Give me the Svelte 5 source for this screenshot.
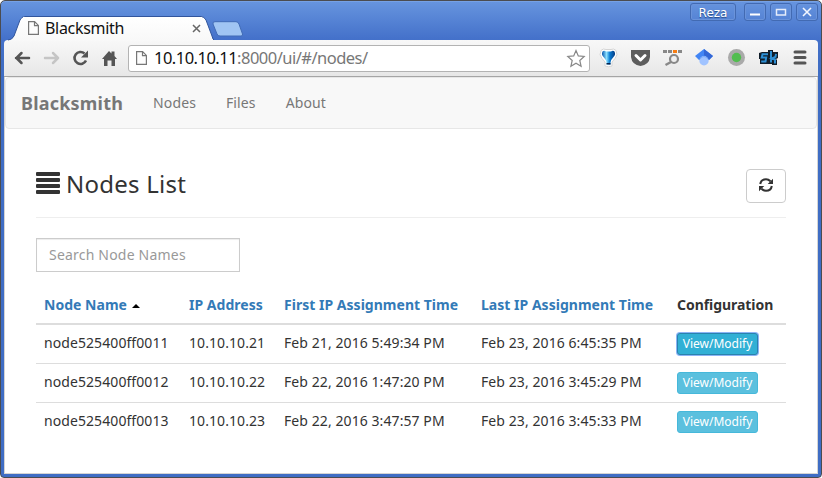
<script>
  let query = $state('');
  const nodes = [
    { name: 'node525400ff0011', ip: '10.10.10.21', first: 'Feb 21, 2016 5:49:34 PM', last: 'Feb 23, 2016 6:45:35 PM', active: true },
    { name: 'node525400ff0012', ip: '10.10.10.22', first: 'Feb 22, 2016 1:47:20 PM', last: 'Feb 23, 2016 3:45:29 PM' },
    { name: 'node525400ff0013', ip: '10.10.10.23', first: 'Feb 22, 2016 3:47:57 PM', last: 'Feb 23, 2016 3:45:33 PM' }
  ];
  const shown = $derived(nodes.filter((n) => n.name.includes(query)));
</script>

{#snippet page()}
  <svg width="11" height="14" viewBox="0 0 11 14"><path d="M.6.6h6L10.400 4.400V13.400H.6zM6.500.6v4h4" fill="#fdfdfd" stroke="#777" stroke-width="1.200"/></svg>
{/snippet}

<div class="window">
  <header class="titlebar">
    <div class="tab">
      <svg class="shape" width="206" height="25" viewBox="0 0 206 25">
        <defs><linearGradient id="tabfill" x2="0" y2="1"><stop stop-color="#fff"/><stop offset="1" stop-color="#f8f8f8"/></linearGradient></defs>
        <path d="M0 25V24Q4 24 6 20L12 4Q13.500 .5 17 .5H193Q196 .5 198 4L204 20Q205 24 206 24V25Z" fill="url(#tabfill)"/>
        <path d="M0 24Q4 24 6 20L12 4Q13.500 .5 17 .5H193Q196 .5 198 4L204 20Q205 24 206 24" fill="none" stroke="#31559c" stroke-width="1"/>
        <path d="M15 1.500H194" stroke="#fff"/>
      </svg>
      <div class="tabrow">
        {@render page()}
        <span class="tabname">Blacksmith</span>
        <svg class="close" width="9" height="9" viewBox="0 0 9 9"><path d="M1 1l7 7M8 1L1 8" stroke="#666" stroke-width="1.500"/></svg>
      </div>
    </div>
    <svg class="newtab" width="32" height="16" viewBox="0 0 32 16"><path d="M3 .7H24Q26 .7 27 3L30.500 13Q31 15 29 15H8Q6 15 5 13L1 3Q.5 .7 3 .7Z" fill="#a0c5f3" stroke="#416bb5"/></svg>
    <div class="controls">
      <span class="user">Reza</span>
      <span class="ctl"><svg width="20" height="17"><path d="M5 10.500h10" stroke="#fff" stroke-width="2"/></svg></span>
      <span class="ctl"><svg width="20" height="17"><path d="M5.500 5.500h9v5.500h-9z" fill="none" stroke="#e6edfa" stroke-width="1.500"/></svg></span>
      <span class="ctl"><svg width="20" height="17"><path d="M6 4l8 8M14 4l-8 8" stroke="#f2f6ff" stroke-width="1.600"/></svg></span>
    </div>
  </header>

  <div class="toolbar">
    <svg class="nav" width="114" height="20" viewBox="0 0 114 20" fill="none">
      <path d="M16 10H3M8.500 5L3.500 10L8.500 15" stroke="#555" stroke-width="2.500" stroke-linecap="round" stroke-linejoin="round"/>
      <path d="M32 10H45M40 5L45 10L40 15" stroke="#c5c5c5" stroke-width="2.500" stroke-linecap="round" stroke-linejoin="round"/>
      <path d="M71.500 5.500A6 6 0 1 0 73 12.500" stroke="#555" stroke-width="2.600"/>
      <path d="M75 2.500v7h-7z" fill="#555"/>
      <path d="M89 11L96 3l2.500 2.500V3.500h3V8L104 11H102v7H98.500V12.500H94.500V18H91V11z" fill="#555"/>
    </svg>
    <div class="address">
      {@render page()}
      <span class="url"><b>10.10.10.11</b>:8000/ui/#/nodes/</span>
      <svg class="star" width="20" height="19" viewBox="0 0 20 19"><path d="M10 1.500l2.300 5.400 5.900.6-4.400 4 1.300 5.800L10 14.300l-5.100 3L6.200 11.500 1.800 7.500l5.900-.6z" fill="#fff" stroke="#888" stroke-width="1.200"/></svg>
    </div>
    <svg class="extensions" width="216" height="22" viewBox="0 0 216 22">
      <defs><linearGradient id="drop" x2="1"><stop stop-color="#0755ad"/><stop offset=".35" stop-color="#8ce0ff"/><stop offset=".6" stop-color="#087bd2"/><stop offset="1" stop-color="#083c83"/></linearGradient></defs>
      <path d="M2 3.500Q4 1 7 2.500H12Q15 1 17 3.500Q19.500 8 16 11.500L13 15V19Q9.500 20.500 6 19V15L3 11.500Q-.5 8 2 3.500Z" fill="#fff" stroke="#d5d5d5"/>
      <path d="M3.500 4.500Q5 3 7 4.500H12Q14 3 15.500 4.500Q17 7.500 14.500 10Q12 12.500 11.500 15.500V17.500H7.500V15.500Q7 12.500 4.500 10Q2 7.500 3.500 4.500Z" fill="url(#drop)"/>
      <path d="M7.500 16h4v1.500h-4z" fill="#08234c"/>
      <path d="M32 3H51V10Q50 18 41.500 19Q33 18 32 10Z" fill="#5d5d5d"/><path d="M37 8.500l4.500 4.500L46 8.500" fill="none" stroke="#fff" stroke-width="3" stroke-linecap="round" stroke-linejoin="round"/>
      <path d="M64 4.500h19" stroke="#888" stroke-width="3" stroke-dasharray="4 1"/><path d="M74 4.500h4" stroke="#f77d13" stroke-width="3"/>
      <circle cx="75" cy="12" r="4" fill="none" stroke="#888" stroke-width="2.200"/><path d="M72 15l-5.500 3" stroke="#888" stroke-width="2.400"/>
      <path d="M96 9L105 2l9 7-4 4H100z" fill="#4285f4"/><path d="M105 2l9 7-4 4L105 8z" fill="#3367d6"/><circle cx="105" cy="13.700" r="4.700" fill="#a0c3ff"/><path d="M101 12Q105 7 109 12" stroke="#7baaf7" fill="none"/>
      <circle cx="137.500" cy="10.500" r="8.500" fill="#aaa"/><circle cx="137.500" cy="10.500" r="4.700" fill="#52bd50"/>
      <path d="M163 5H169V3H174V5H179V11L177 12L178 13V18H173V17H161V12H160V6Z" fill="#101d29"/>
      <path d="M169 7.200h-5.500l-.8 3.300h4.500l-.7 4h-4.300M172 4v11.500M177 6.800l-.5 3-4 1.700 3.500 1v4" fill="none" stroke="#2b8ed4" stroke-width="2"/>
      <path d="M196 5h10M196 10.500h10M196 16h10" stroke="#555" stroke-width="3" stroke-linecap="round"/>
    </svg>
  </div>

  <main>
    <nav class="navbar"><span class="brand">Blacksmith</span><span>Nodes</span><span>Files</span><span>About</span></nav>
    <section>
      <div class="heading">
        <svg width="24" height="22"><path d="M1 0h22q1 0 1 1v2q0 1-1 1H1q-1 0-1-1V1q0-1 1-1zM1 6h22q1 0 1 1v2q0 1-1 1H1q-1 0-1-1V7q0-1 1-1zM1 12h22q1 0 1 1v2q0 1-1 1H1q-1 0-1-1v-2q0-1 1-1zM1 18h22q1 0 1 1v2q0 1-1 1H1q-1 0-1-1v-2q0-1 1-1z" fill="#333"/></svg>
        <h1>Nodes List</h1>
        <button class="refresh" aria-label="Refresh"><svg width="14" height="14" viewBox="0 0 14 14"><path d="M1.200 6Q2 1.200 7 1.200Q9.500 1.200 11.500 3.200M12.800 8Q12 12.800 7 12.800Q4.500 12.800 2.500 10.800" fill="none" stroke="#333" stroke-width="2"/><path d="M14 .7V6H8.700zM0 13.300V8h5.300z" fill="#333"/></svg></button>
      </div>
      <input bind:value={query} placeholder="Search Node Names" />
      <table>
        <colgroup><col class="c1"/><col class="c2"/><col class="c3"/><col class="c4"/><col/></colgroup>
        <thead><tr><th>Node Name<i class="caret"></i></th><th>IP Address</th><th>First IP Assignment Time</th><th>Last IP Assignment Time</th><th class="plain">Configuration</th></tr></thead>
        <tbody>
          {#each shown as node}
            <tr><td>{node.name}</td><td>{node.ip}</td><td>{node.first}</td><td>{node.last}</td><td><button class="view" class:active={node.active}>View/Modify</button></td></tr>
          {/each}
        </tbody>
      </table>
    </section>
  </main>
</div>

<style>
  :global(body) { margin: 0; background: #fff; }
  * { box-sizing: border-box; }
  svg { display: block; flex: none; }
  .window { width: 822px; height: 478px; display: flex; flex-direction: column; padding: 0 3px 3px; border: 1px solid #4b4c50; border-radius: 5px 5px 4px 4px; background: linear-gradient(#6795df, #4471ca 38px, #3f6dc4 60px); font: 14px/20px "Noto Sans", sans-serif; color: #333; overflow: hidden; box-shadow: inset 0 1px #76a1e5; }
  .titlebar { height: 39px; display: flex; align-items: flex-end; flex: none; }
  .tab { width: 206px; height: 25px; margin-left: 4px; display: grid; margin-bottom: -1px; z-index: 1; }
  .tab > * { grid-area: 1 / 1; }
  .tabrow { display: flex; align-items: center; padding: 0 13px 1px 20px; z-index: 1; }
  .tabname { margin-left: 6px; font-size: 16px; color: #111; letter-spacing: -.3px; }
  .close { margin-left: auto; }
  .newtab { margin: 0 0 3px -2px; }
  .controls { margin-left: auto; align-self: flex-start; display: flex; gap: 4px; padding: 2px 0 0; }
  .user, .ctl { border: 1px solid #426ab2; box-shadow: inset 0 0 0 1px #6a93da; border-radius: 3px; height: 18px; display: block; }
  .ctl { width: 22px; }
  .user { width: 46px; text-align: center; color: #fff; font: 12px/18px "DejaVu Sans", sans-serif; text-shadow: 0 1px 1px #234782; margin-right: 4px; }
  .toolbar { height: 37px; flex: none; display: flex; align-items: center; background: linear-gradient(#f8f8f8, #e7e7e7); border-bottom: 1px solid #a5a5a5; border-radius: 4px 4px 0 0; padding-left: 9px; }
  .address { width: 462px; height: 27px; margin-left: 1px; border: 1px solid #b3b3b3; border-radius: 3px; background: #fff; display: flex; align-items: center; padding: 0 3px 0 7px; }
  .url { color: #777; font-size: 16.5px; margin-left: 7px; white-space: nowrap; letter-spacing: -.52px; }
  .url b { font-weight: 400; color: #111; }
  .star { margin-left: auto; }
  .extensions { margin-left: 9px; }
  main { background: #fff; flex: 1; border: 1px solid #d4d4d4; border-top: 0; }
  .navbar { height: 52px; border: 1px solid #e7e7e7; border-radius: 4px; background: #f8f8f8; display: flex; align-items: center; padding-left: 15px; gap: 30px; color: #777; letter-spacing: .12px; }
  .brand { font-size: 18px; font-weight: 700; letter-spacing: .2px; }
  section { padding: 40px 31px 0; }
  .heading { display: flex; height: 49px; border-bottom: 1px solid #eee; align-items: flex-start; }
  .heading > svg { margin-top: 3px; }
  h1 { font-weight: 400; font-size: 24px; line-height: 30px; margin: 0 0 0 6px; letter-spacing: .25px; }
  .refresh { width: 40px; height: 34px; border: 1px solid #ccc; border-radius: 4px; background: #fff; display: flex; justify-content: center; align-items: center; padding: 0 0 2px; margin-left: auto; }
  input { display: block; width: 204px; height: 34px; margin-top: 20px; border: 1px solid #ccc; border-radius: 0; box-shadow: inset 0 1px 1px #00000013; padding: 5px 12px 7px; font: 14px "Noto Sans", sans-serif; letter-spacing: .2px; }
  input::placeholder { color: #999; opacity: 1; }
  table { width: 750px; table-layout: fixed; border-collapse: separate; border-spacing: 0; margin-top: 15px; }
  .c1 { width: 145px; } .c2 { width: 95px; } .c3 { width: 197px; } .c4 { width: 196px; }
  th { text-align: left; color: #337ab7; padding: 8px; border-bottom: 2px solid #ddd; height: 38px; white-space: nowrap; letter-spacing: .02px; }
  .plain { color: #333; letter-spacing: -.05px; }
  .caret { display: inline-block; border: 4px solid transparent; border-top: 0; border-bottom-color: #000; margin-left: 5px; vertical-align: 2px; }
  td { height: 39px; padding: 8px 8px 7px; border-bottom: 1px solid #ddd; vertical-align: top; white-space: nowrap; letter-spacing: .08px; }
  tbody tr:last-child td { border-bottom-color: transparent; }
  .view { display: block; width: 81px; height: 22px; padding: 0; font: 12px/18px "Noto Sans", sans-serif; color: #fff; background: #5bc0de; border: 1px solid #46b8da; border-radius: 3px; }
  .view.active { background: #31b0d5; border-color: #2a83ad; box-shadow: 0 0 0 1px #8ab4f6; }
</style>
